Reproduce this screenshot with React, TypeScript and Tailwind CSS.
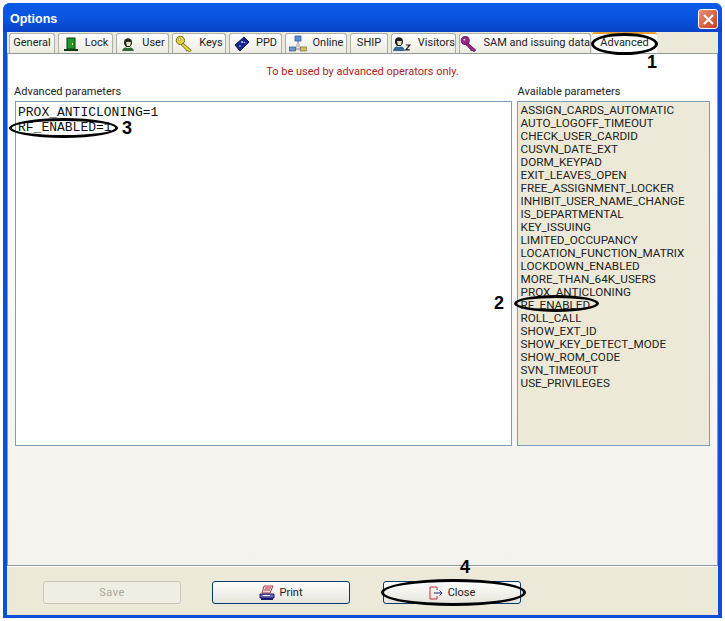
import React from 'react';

const LockIcon = () => (
  <svg width="16" height="16" viewBox="0 0 16 16">
    <rect x="4" y="2" width="8" height="11" fill="#1c9a2c" stroke="#0a3d10" />
    <rect x="1" y="13" width="14" height="2" fill="#0a3d10" />
    <rect x="9" y="7" width="1" height="2" fill="#e8e060" />
  </svg>
);

const UserIcon = () => (
  <svg width="16" height="16" viewBox="0 0 16 16">
    <path d="M4 6 C4 1 12 1 12 6 L12 8 L10 11 L6 11 L4 8 Z" fill="#1e2a1e" />
    <path d="M6 6 L11 6 L10 10 L7 10 Z" fill="#e8e4c8" />
    <path d="M2 15 C3 11 6 11 8 12 C10 11 13 11 14 15 Z" fill="#2c6a3a" />
  </svg>
);

const VisitorsIcon = () => (
  <svg width="20" height="16" viewBox="0 0 20 16">
    <path d="M3 5 C3 0 11 0 11 5 L11 7 L9 10 L5 10 L3 7 Z" fill="#1a1a1a" />
    <path d="M5 5 L10 5 L9 9 L6 9 Z" fill="#e8e4c8" />
    <path d="M1 15 C2 10 5 10 7 11 C9 10 12 10 13 15 Z" fill="#33689a" />
    <path d="M14 9 H18 L14 14 H18" fill="none" stroke="#1a1a1a" strokeWidth="1.2" />
  </svg>
);

const KeyIcon = ({ color, dark, size }: { color: string; dark: string; size: number }) => (
  <svg width={size} height={size} viewBox="0 0 20 20">
    <circle cx="6" cy="6" r="4.6" fill={color} stroke={dark} />
    <circle cx="5" cy="5" r="1.4" fill="#ffffff" stroke={dark} strokeWidth="0.6" />
    <path d="M9 9 L18 17 L16 19 L14 17 L13 18 L12 16 L7 11 Z" fill={color} stroke={dark} />
  </svg>
);

const PpdIcon = () => (
  <svg width="16" height="16" viewBox="0 0 16 16">
    <path d="M1 9 L10 1 L15 6 L6 15 Z" fill="#16268c" stroke="#0a1250" />
    <circle cx="8" cy="6" r="1" fill="#c8d8ff" />
    <circle cx="10.5" cy="6.5" r="0.8" fill="#c8d8ff" />
    <circle cx="6" cy="10" r="0.8" fill="#c8d8ff" />
  </svg>
);

const OnlineIcon = () => (
  <svg width="18" height="18" viewBox="0 0 18 18">
    <path d="M9 6 V11 M3 14 L15 14 M9 11 L4 14 M9 11 L14 14" stroke="#6a7a90" fill="none" />
    <rect x="6" y="1" width="6" height="5" fill="#5b8fdc" stroke="#2a508c" strokeWidth="0.7" />
    <rect x="7" y="9" width="4" height="3" fill="#c8c8c0" />
    <rect x="0.5" y="12" width="6" height="4" fill="#6f94c8" stroke="#3a5a88" strokeWidth="0.7" />
    <rect x="11.5" y="12" width="6" height="4" fill="#d8b860" stroke="#807040" strokeWidth="0.7" />
  </svg>
);

const PrintIcon = () => (
  <svg width="16" height="16" viewBox="0 0 16 16">
    <path d="M5 1 L14 1 L11 8 L3 8 Z" fill="#f4e0e0" stroke="#b03040" />
    <path d="M6 3 H12 M5 5 H11" stroke="#b03040" />
    <path d="M1 9 H15 V13 H1 Z" fill="#6a68b8" stroke="#181a70" />
    <rect x="2" y="13" width="12" height="2" fill="#181a70" />
    <rect x="4" y="10" width="7" height="1" fill="#ffffff" />
  </svg>
);

const CloseIcon = () => (
  <svg width="14" height="14" viewBox="0 0 14 14">
    <path d="M8 4 V1 H1 V13 H8 V10" fill="none" stroke="#c0303c" />
    <path d="M5 7 H13 M10.5 4.5 L13 7 L10.5 9.5" fill="none" stroke="#1c2a80" />
  </svg>
);

const tabs = [
  { label: 'General', width: 'w-[46px]' },
  { label: 'Lock', width: 'w-[55px]', icon: <LockIcon /> },
  { label: 'User', width: 'w-[53px]', icon: <UserIcon /> },
  { label: 'Keys', width: 'w-[54px]', icon: <KeyIcon color="#e8d840" dark="#6a5a10" size={18} /> },
  { label: 'PPD', width: 'w-[53px]', icon: <PpdIcon /> },
  { label: 'Online', width: 'w-[62px]', icon: <OnlineIcon /> },
  { label: 'SHIP', width: 'w-[38px]' },
  { label: 'Visitors', width: 'w-[65px]', icon: <VisitorsIcon /> },
  { label: 'SAM and issuing data', width: 'w-[132px]', icon: <KeyIcon color="#a02090" dark="#501048" size={20} /> },
];

const params = [
  'ASSIGN_CARDS_AUTOMATIC',
  'AUTO_LOGOFF_TIMEOUT',
  'CHECK_USER_CARDID',
  'CUSVN_DATE_EXT',
  'DORM_KEYPAD',
  'EXIT_LEAVES_OPEN',
  'FREE_ASSIGNMENT_LOCKER',
  'INHIBIT_USER_NAME_CHANGE',
  'IS_DEPARTMENTAL',
  'KEY_ISSUING',
  'LIMITED_OCCUPANCY',
  'LOCATION_FUNCTION_MATRIX',
  'LOCKDOWN_ENABLED',
  'MORE_THAN_64K_USERS',
  'PROX_ANTICLONING',
  'RF_ENABLED',
  'ROLL_CALL',
  'SHOW_EXT_ID',
  'SHOW_KEY_DETECT_MODE',
  'SHOW_ROM_CODE',
  'SVN_TIMEOUT',
  'USE_PRIVILEGES',
];

export default function App() {
  return (
    <div className="relative w-[725px] h-[621px] bg-white p-[3px] overflow-hidden font-['Roboto',sans-serif] text-[11px] text-[#222]">
      <div className="flex flex-col h-full rounded-t-[7px] bg-[#0f4fd8] px-[4px] pb-[3px] overflow-hidden">
        <div className="flex items-center justify-between h-[29px] shrink-0 -mx-[4px] pl-[7px] pr-[4px] pt-[3px] bg-gradient-to-b from-[#0a5ae8] via-[#0a55e0] to-[#0843c8]">
          <span className="text-[12.5px] font-bold text-white font-['Liberation_Sans',sans-serif]">Options</span>
          <div className="flex items-center justify-center w-[20px] h-[20px] rounded-[3px] border border-white bg-gradient-to-br from-[#e89078] to-[#c83c18]">
            <svg width="13" height="13" viewBox="0 0 13 13">
              <path d="M2 2 L11 11 M11 2 L2 11" stroke="#ffffff" strokeWidth="2.2" />
            </svg>
          </div>
        </div>

        <div className="flex items-end gap-[3px] h-[21px] shrink-0 pl-[2px] bg-[#ece9d8]">
          {tabs.map((tab) => (
            <div
              key={tab.label}
              className={`flex items-center justify-center gap-[6px] h-[20px] shrink-0 border border-b-0 border-[#a9b0b0] rounded-t-[3px] bg-gradient-to-b from-white to-[#ecebe2] ${tab.width}`}
            >
              {tab.icon}
              <span className="whitespace-nowrap">{tab.label}</span>
            </div>
          ))}
          <div className="flex items-center justify-center w-[65px] h-[21px] -ml-[2px] shrink-0 border-t-[2px] border-[#e8a030] bg-white rounded-t-[3px]">
            Advanced
          </div>
        </div>

        <div className="flex flex-col flex-1 px-[7px] border border-[#919b9c] bg-gradient-to-b from-white to-[#f3f2ec]">
          <div className="h-[31px] pt-[11px] text-center text-[#b02020] leading-[14px]">To be used by advanced operators only.</div>
          <div className="flex gap-[5px]">
            <div className="flex flex-col w-[498px]">
              <span className="h-[16px] leading-[14px] -ml-[1px]">Advanced parameters</span>
              <div className="h-[345px] px-[2px] pt-[3px] border border-[#7f9db9] bg-white font-['Liberation_Mono',monospace] text-[13px] leading-[15px] text-[#111]">
                <div className="w-fit">PROX_ANTICLONING=1</div>
                <div className="w-fit">RF_ENABLED=1</div>
              </div>
            </div>
            <div className="flex flex-col w-[194px]">
              <span className="h-[16px] leading-[14px] pl-[1px]">Available parameters</span>
              <div className="h-[345px] px-[3px] pt-[2px] border border-[#7f9db9] bg-[#ece9d8] text-[11.7px] leading-[13px] text-[#222]">
                {params.map((name) => (
                  <div key={name}>{name}</div>
                ))}
              </div>
            </div>
          </div>
        </div>

        <div className="flex items-center h-[49px] shrink-0 pl-[36px] pt-[2px] gap-[31px] bg-[#ece9d8] border-t border-white">
          <button className="w-[138px] h-[23px] pt-[2px] rounded-[3px] border border-[#c9c7ba] bg-[#f0eee2] text-[#a8a798] tracking-[0.5px]">Save</button>
          <button className="flex items-center justify-center gap-[4px] w-[138px] h-[23px] pt-[1px] rounded-[3px] border border-[#003c74] bg-gradient-to-b from-white to-[#e6e4da]">
            <PrintIcon />
            <span className="pt-[1px]">Print</span>
          </button>
          <button className="flex items-center justify-center gap-[5px] w-[138px] h-[23px] pt-[1px] ml-[2px] rounded-[3px] border border-[#003c74] bg-gradient-to-b from-white to-[#e6e4da]">
            <CloseIcon />
            <span className="pt-[1px]">Close</span>
          </button>
        </div>
      </div>

      {/* black callouts drawn on top of the dialog */}
      <div className="absolute left-[591px] top-[33px] w-[67px] h-[22px] rounded-[50%] border-[3px] border-black" />
      <div className="absolute left-[9px] top-[118px] w-[109px] h-[20px] rounded-[50%] border-[3px] border-black" />
      <div className="absolute left-[514px] top-[295px] w-[85px] h-[17px] rounded-[50%] border-[3px] border-black" />
      <div className="absolute left-[381px] top-[579px] w-[145px] h-[27px] rounded-[50%] border-[3px] border-black" />
      <span className="absolute left-[647px] top-[52px] text-[18px] leading-[20px] font-bold text-black font-['Liberation_Sans',sans-serif]">1</span>
      <span className="absolute left-[494px] top-[293px] text-[18px] leading-[20px] font-bold text-black font-['Liberation_Sans',sans-serif]">2</span>
      <span className="absolute left-[122px] top-[118px] text-[18px] leading-[20px] font-bold text-black font-['Liberation_Sans',sans-serif]">3</span>
      <span className="absolute left-[460px] top-[557px] text-[18px] leading-[20px] font-bold text-black font-['Liberation_Sans',sans-serif]">4</span>
    </div>
  );
}
